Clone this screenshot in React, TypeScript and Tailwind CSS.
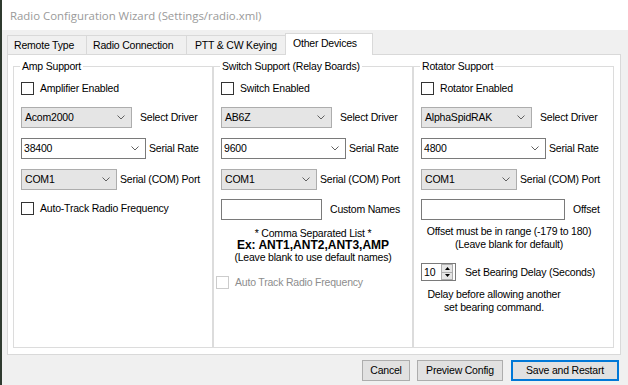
import React from "react";

function Chevron() {
  return (
    <svg width="8" height="5" viewBox="0 0 8 5" className="shrink-0">
      <path d="M0.5 0.5 L4 4 L7.5 0.5" fill="none" stroke="#606060" strokeWidth="1" />
    </svg>
  );
}

function Check({ label, disabled }: { label: string; disabled?: boolean }) {
  return (
    <div className="flex h-[14px] items-center gap-[6px]">
      <span
        className={
          "h-[13px] w-[13px] shrink-0 border bg-white " +
          (disabled ? "border-[#cccccc]" : "border-[#333333]")
        }
      />
      <span className={disabled ? "text-[#8d8d8d]" : ""}>{label}</span>
    </div>
  );
}

function Select({
  value,
  width,
  editable,
  label,
  gap,
}: {
  value: string;
  width: string;
  editable?: boolean;
  label: string;
  gap: string;
}) {
  return (
    <div className={"flex h-[21px] items-center " + gap}>
      <div
        className={
          "flex h-[21px] shrink-0 items-center justify-between border pr-[6px] " +
          width +
          (editable
            ? " border-[#7a7a7a] bg-white pl-[2px]"
            : " border-[#adadad] bg-[#e5e5e5] pl-[3px]")
        }
      >
        <span>{value}</span>
        <Chevron />
      </div>
      <span>{label}</span>
    </div>
  );
}

function TextRow({ width, label }: { width: string; label: string }) {
  return (
    <div className="flex h-[21px] items-center gap-[8px]">
      <div className={"h-[21px] shrink-0 border border-[#7a7a7a] bg-white " + width} />
      <span>{label}</span>
    </div>
  );
}

function Group({
  title,
  width,
  children,
}: {
  title: string;
  width: string;
  children: React.ReactNode;
}) {
  return (
    <div className={"relative h-[282px] shrink-0 border border-[#dcdcdc] " + width}>
      <span className="absolute -top-[7px] left-[6px] bg-white px-[2px] leading-[13px]">
        {title}
      </span>
      <div className="flex flex-col pl-[7px]">{children}</div>
    </div>
  );
}

function Spinner() {
  return (
    <div className="flex h-[18px] w-[35px] shrink-0 items-center border border-[#7a7a7a] bg-white pl-[2px]">
      <span className="flex-1">10</span>
      <div className="mr-[2px] flex h-[16px] w-[12px] flex-col">
        <div className="flex flex-1 items-center justify-center border border-[#adadad] bg-[#e5e5e5]">
          <svg width="5" height="3" viewBox="0 0 5 3">
            <path d="M0 3 L2.5 0 L5 3 Z" fill="#000" />
          </svg>
        </div>
        <div className="flex flex-1 items-center justify-center border border-t-0 border-[#adadad] bg-[#e5e5e5]">
          <svg width="5" height="3" viewBox="0 0 5 3">
            <path d="M0 0 L2.5 3 L5 0 Z" fill="#000" />
          </svg>
        </div>
      </div>
    </div>
  );
}

const tabs = ["Remote Type", "Radio Connection", "PTT & CW Keying"];
const tabWidths = ["w-[80px] pl-[6px]", "w-[101px] -ml-px pl-[6px]", "w-[101px] -ml-px pl-[8px]"];

export default function App() {
  return (
    <div className="flex h-[385px] w-[628px] flex-col overflow-hidden whitespace-nowrap border-l-2 border-[#2f3a2f] bg-[#f0f0f0] font-['Liberation_Sans',Arial,sans-serif] text-[10.5px] leading-[13px] tracking-[-0.2px] text-black">
      {/* title bar */}
      <div className="flex h-[30px] shrink-0 items-center bg-white pl-[8px] font-['Open_Sans',sans-serif] text-[11.4px] tracking-normal text-[#9a9a9a]">
        Radio Configuration Wizard (Settings/radio.xml)
      </div>

      {/* tabs */}
      <div className="mt-[4px] flex h-[20px] items-end pl-[5px]">
        {tabs.map((t, i) => (
          <div
            key={t}
            className={
              "flex h-[19px] items-center border border-b-0 border-[#d9d9d9] bg-[#f0f0f0] " +
              tabWidths[i]
            }
          >
            {t}
          </div>
        ))}
        <div className="relative z-10 -mb-px -ml-[2px] flex h-[22px] w-[88px] items-center border border-b-0 border-[#d9d9d9] bg-white pb-[2px] pl-[7px]">
          Other Devices
        </div>
      </div>

      {/* panel */}
      <div className="ml-[5px] flex h-[301px] w-[614px] shrink-0 border border-[#d9d9d9] bg-white pl-[5px] pt-[11px]">
        <Group title="Amp Support" width="w-[200px]">
          <div className="mt-[14px]">
            <Check label="Amplifier Enabled" />
          </div>
          <div className="mt-[12px]">
            <Select value="Acom2000" width="w-[111px]" label="Select Driver" gap="gap-[8px]" />
          </div>
          <div className="mt-[10px]">
            <Select value="38400" width="w-[125px]" editable label="Serial Rate" gap="gap-[3px]" />
          </div>
          <div className="mt-[10px]">
            <Select value="COM1" width="w-[96px]" label="Serial (COM) Port" gap="gap-[3px]" />
          </div>
          <div className="mt-[11px]">
            <Check label="Auto-Track Radio Frequency" />
          </div>
        </Group>

        <Group title="Switch Support (Relay Boards)" width="w-[200px]">
          <div className="mt-[14px]">
            <Check label="Switch Enabled" />
          </div>
          <div className="mt-[12px]">
            <Select value="AB6Z" width="w-[111px]" label="Select Driver" gap="gap-[8px]" />
          </div>
          <div className="mt-[10px]">
            <Select value="9600" width="w-[125px]" editable label="Serial Rate" gap="gap-[3px]" />
          </div>
          <div className="mt-[10px]">
            <Select value="COM1" width="w-[96px]" label="Serial (COM) Port" gap="gap-[3px]" />
          </div>
          <div className="mt-[9px]">
            <TextRow width="w-[101px]" label="Custom Names" />
          </div>
          <div className="-ml-[7px] mt-[7px] flex flex-col items-center leading-[12px]">
            <span>* Comma Separated List *</span>
            <span className="text-[12px] font-bold tracking-normal">Ex: ANT1,ANT2,ANT3,AMP</span>
            <span>(Leave blank to use default names)</span>
          </div>
          <div className="-ml-[5px] mt-[12px]">
            <Check label="Auto Track Radio Frequency" disabled />
          </div>
        </Group>

        <Group title="Rotator Support" width="w-[201px]">
          <div className="mt-[14px]">
            <Check label="Rotator Enabled" />
          </div>
          <div className="mt-[12px]">
            <Select value="AlphaSpidRAK" width="w-[111px]" label="Select Driver" gap="gap-[8px]" />
          </div>
          <div className="mt-[10px]">
            <Select value="4800" width="w-[125px]" editable label="Serial Rate" gap="gap-[3px]" />
          </div>
          <div className="mt-[10px]">
            <Select value="COM1" width="w-[96px]" label="Serial (COM) Port" gap="gap-[3px]" />
          </div>
          <div className="mt-[9px]">
            <TextRow width="w-[144px]" label="Offset" />
          </div>
          <div className="mt-[5px] flex w-[176px] flex-col items-center">
            <span>Offset must be in range (-179 to 180)</span>
            <span>(Leave blank for default)</span>
          </div>
          <div className="mt-[12px] flex items-center gap-[9px]">
            <Spinner />
            <span>Set Bearing Delay (Seconds)</span>
          </div>
          <div className="mt-[7px] flex w-[146px] flex-col items-center">
            <span>Delay before allowing another</span>
            <span>set bearing command.</span>
          </div>
        </Group>
      </div>

      {/* buttons */}
      <div className="mt-[5px] flex justify-end gap-[7px] pr-[9px]">
        <button className="h-[21px] w-[48px] border border-[#adadad] bg-[#e1e1e1]">Cancel</button>
        <button className="h-[21px] w-[86px] border border-[#adadad] bg-[#e1e1e1]">Preview Config</button>
        <button className="ml-[1px] h-[21px] w-[108px] border-2 border-[#0078d7] bg-[#e1e1e1]">
          Save and Restart
        </button>
      </div>
    </div>
  );
}
